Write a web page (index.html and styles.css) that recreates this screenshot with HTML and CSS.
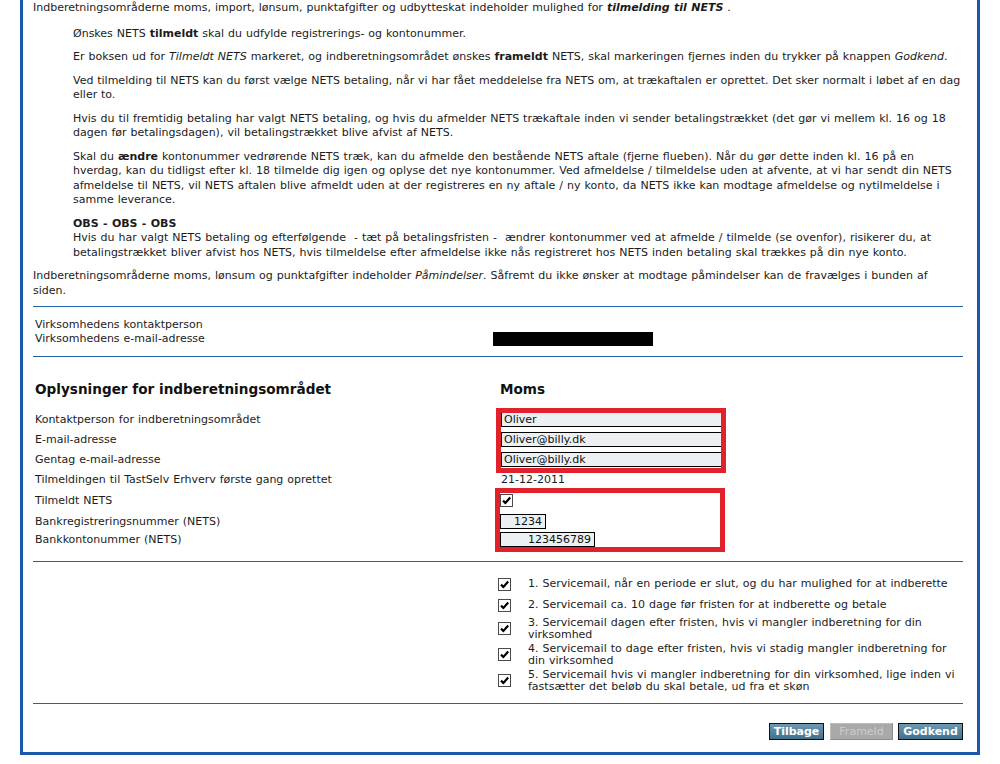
FILE: index.html
```html
<!DOCTYPE html>
<html lang="da">
<head>
<meta charset="utf-8">
<title>Oplysninger for indberetningsområdet</title>
<link rel="stylesheet" href="styles.css">
</head>
<body>
<div class="frame">
  <section class="intro">
    <p>Indberetningsområderne moms, import, lønsum, punktafgifter og udbytteskat indeholder mulighed for <b><i>tilmelding til NETS</i></b> .</p>
    <div class="indent">
      <p>Ønskes NETS <b>tilmeldt</b> skal du udfylde registrerings- og kontonummer.</p>
      <p>Er boksen ud for <i>Tilmeldt NETS</i> markeret, og indberetningsområdet ønskes <b>frameldt</b> NETS, skal markeringen fjernes inden du trykker på knappen <i>Godkend</i>.</p>
      <p class="snug">Ved tilmelding til NETS kan du først vælge NETS betaling, når vi har fået meddelelse fra NETS om, at trækaftalen er oprettet. Det sker normalt i løbet af en dag eller to.</p>
      <p>Hvis du til fremtidig betaling har valgt NETS betaling, og hvis du afmelder NETS trækaftale inden vi sender betalingstrækket (det gør vi mellem kl. 16 og 18 dagen før betalingsdagen), vil betalingstrækket blive afvist af NETS.</p>
      <p>Skal du <b>ændre</b> kontonummer vedrørende NETS træk, kan du afmelde den bestående NETS aftale (fjerne flueben). Når du gør dette inden kl. 16 på en hverdag, kan du tidligst efter kl. 18 tilmelde dig igen og oplyse det nye kontonummer. Ved afmeldelse / tilmeldelse uden at afvente, at vi har sendt din NETS afmeldelse til NETS, vil NETS aftalen blive afmeldt uden at der registreres en ny aftale / ny konto, da NETS ikke kan modtage afmeldelse og nytilmeldelse i samme leverance.</p>
      <p><b>OBS - OBS - OBS</b><br>Hvis du har valgt NETS betaling og efterfølgende &nbsp;- tæt på betalingsfristen - &nbsp;ændrer kontonummer ved at afmelde / tilmelde (se ovenfor), risikerer du, at betalingstrækket bliver afvist hos NETS, hvis tilmeldelse efter afmeldelse ikke nås registreret hos NETS inden betaling skal trækkes på din nye konto.</p>
    </div>
    <p class="last">Indberetningsområderne moms, lønsum og punktafgifter indeholder <i>Påmindelser</i>. Såfremt du ikke ønsker at modtage påmindelser kan de fravælges i bunden af siden.</p>
  </section>

  <section class="contact">
    <div class="c-lbl">Virksomhedens kontaktperson</div>
    <div class="c-val"></div>
    <div class="c-lbl">Virksomhedens e-mail-adresse</div>
    <div class="c-val"><span class="redact"></span></div>
  </section>

  <section class="form">
    <div class="form-grid">
      <h2 class="head">Oplysninger for indberetningsområdet</h2>
      <h2 class="head head-val">Moms</h2>

      <div class="lbl r20">Kontaktperson for indberetningsområdet</div>
      <div class="val r20"><input class="field wide" type="text" value="Oliver"></div>

      <div class="lbl r20">E-mail-adresse</div>
      <div class="val r20"><input class="field wide" type="text" value="Oliver@billy.dk"></div>

      <div class="lbl r20">Gentag e-mail-adresse</div>
      <div class="val r20"><input class="field wide" type="text" value="Oliver@billy.dk"></div>

      <div class="lbl r20">Tilmeldingen til TastSelv Erhverv første gang oprettet</div>
      <div class="val r20 date">21-12-2011</div>

      <div class="lbl r22">Tilmeldt NETS</div>
      <div class="val r22"><span class="cb"><svg viewBox="0 0 11 11" width="11" height="11"><path d="M2 5.6 L4.4 8 L9.2 2.6" fill="none" stroke="#000" stroke-width="2.2"/></svg></span></div>

      <div class="lbl r20">Bankregistreringsnummer (NETS)</div>
      <div class="val r20"><input class="field num reg" type="text" value="1234"></div>

      <div class="lbl r16">Bankkontonummer (NETS)</div>
      <div class="val r16"><input class="field num acct" type="text" value="123456789"></div>
    </div>
    <div class="mark mark-a"></div>
    <div class="mark mark-b"></div>
  </section>

  <section class="service">
    <div class="svc-list">
      <div class="svc one"><span class="cb"><svg viewBox="0 0 11 11" width="11" height="11"><path d="M2 5.6 L4.4 8 L9.2 2.6" fill="none" stroke="#000" stroke-width="2.2"/></svg></span><span class="svc-text">1. Servicemail, når en periode er slut, og du har mulighed for at indberette</span></div>
      <div class="svc one"><span class="cb"><svg viewBox="0 0 11 11" width="11" height="11"><path d="M2 5.6 L4.4 8 L9.2 2.6" fill="none" stroke="#000" stroke-width="2.2"/></svg></span><span class="svc-text">2. Servicemail ca. 10 dage før fristen for at indberette og betale</span></div>
      <div class="svc two"><span class="cb"><svg viewBox="0 0 11 11" width="11" height="11"><path d="M2 5.6 L4.4 8 L9.2 2.6" fill="none" stroke="#000" stroke-width="2.2"/></svg></span><span class="svc-text">3. Servicemail dagen efter fristen, hvis vi mangler indberetning for din virksomhed</span></div>
      <div class="svc two"><span class="cb"><svg viewBox="0 0 11 11" width="11" height="11"><path d="M2 5.6 L4.4 8 L9.2 2.6" fill="none" stroke="#000" stroke-width="2.2"/></svg></span><span class="svc-text">4. Servicemail to dage efter fristen, hvis vi stadig mangler indberetning for din virksomhed</span></div>
      <div class="svc two"><span class="cb"><svg viewBox="0 0 11 11" width="11" height="11"><path d="M2 5.6 L4.4 8 L9.2 2.6" fill="none" stroke="#000" stroke-width="2.2"/></svg></span><span class="svc-text">5. Servicemail hvis vi mangler indberetning for din virksomhed, lige inden vi fastsætter det beløb du skal betale, ud fra et skøn</span></div>
    </div>
  </section>

  <section class="actions">
    <button class="btn b-back" type="button">Tilbage</button>
    <button class="btn b-off" type="button" disabled>Frameld</button>
    <button class="btn b-ok" type="button">Godkend</button>
  </section>
</div>
</body>
</html>
```

FILE: styles.css
```css
* { box-sizing: border-box; }

body {
  margin: 0;
  background: #fff;
  font-family: "DejaVu Sans", Verdana, sans-serif;
  font-size: 11px;
  word-spacing: 0.5px;
  color: #1b1b1b;
}

.frame {
  margin-left: 20px;
  width: 960px;
  border: 3px solid #1a5aa8;
  border-top: none;
  padding: 1px 14px 12px 10px;
}

.intro p {
  margin: 0 0 9px;
  line-height: 14.5px;
}

.intro p.snug { word-spacing: 0.3px; }

.intro p.last { margin-bottom: 8px; }

.intro .indent {
  margin: 11px 0 0 40px;
}

section.contact,
section.form,
section.service,
section.actions {
  border-top: 1px solid #2561a3;
}

.contact {
  display: grid;
  grid-template-columns: 460px 1fr;
  grid-auto-rows: 14px;
  line-height: 14px;
  padding: 11px 0 10px;
}

.c-lbl { padding-left: 2px; }

.redact {
  display: block;
  width: 160px;
  height: 14px;
  background: #000;
}

.form {
  position: relative;
  padding: 23px 0 14px;
}

.form-grid {
  display: grid;
  grid-template-columns: 467px 1fr;
  align-items: center;
}

.head {
  margin: 0 0 11px;
  font-size: 13.6px;
  line-height: 18px;
  font-weight: bold;
  word-spacing: 0;
  color: #111;
  padding-left: 2px;
}

.head-val { padding-left: 0; }

.lbl { padding-left: 2px; }

.lbl, .val {
  display: flex;
  align-items: center;
}

.r20 { height: 20px; }
.r22 { height: 22px; }
.r16 { height: 16px; }

.date { padding-left: 1px; }

.field {
  height: 15px;
  margin: 0;
  border: 1px solid #000;
  background: #edf0f2;
  font-family: "DejaVu Sans", Verdana, sans-serif;
  font-size: 11px;
  color: #111;
  padding: 0 2px;
  border-radius: 0;
  outline: none;
}

.wide { width: 221px; margin-left: 1px; }

.num { text-align: right; padding-right: 3px; }
.reg { width: 46px; }
.acct { width: 95px; }

.cb {
  display: inline-flex;
  align-items: center;
  justify-content: center;
  width: 13px;
  height: 13px;
  border: 1px solid #4a4a4a;
  background: #fff;
  flex: none;
}

.mark {
  position: absolute;
  border: 5px solid #e2222a;
  pointer-events: none;
}

.mark-a { left: 463px; top: 51px; width: 230px; height: 65px; }
.mark-b { left: 462px; top: 131px; width: 230px; height: 64px; }

.service {
  padding: 11.5px 0 9.5px;
}

.svc-list {
  margin-left: 465px;
  display: flex;
  flex-direction: column;
}

.svc {
  display: flex;
  align-items: center;
  gap: 17px;
  line-height: 12px;
}

.svc.one { height: 21px; }
.svc.two { height: 26px; }

.svc-text { width: 435px; }

.actions {
  display: flex;
  justify-content: flex-end;
  padding-top: 19px;
}

.btn {
  height: 17px;
  margin: 0;
  padding: 0;
  border: 1px solid #111;
  background: linear-gradient(#6f98b2, #42708c);
  color: #fff;
  font-family: "DejaVu Sans", Verdana, sans-serif;
  font-size: 11px;
  font-weight: bold;
  word-spacing: 0;
  line-height: 15px;
  text-align: center;
  border-radius: 0;
}

.b-back { width: 55px; margin-right: 6px; }
.b-off { width: 63px; margin-right: 5px; }
.b-ok { width: 65px; }

.b-off {
  background: #a9a9a9;
  color: #cdcdcd;
  border: 1px solid #bcbcbc;
  border-bottom-color: #8d8d8d;
  border-right-color: #8d8d8d;
  font-weight: normal;
}
```
